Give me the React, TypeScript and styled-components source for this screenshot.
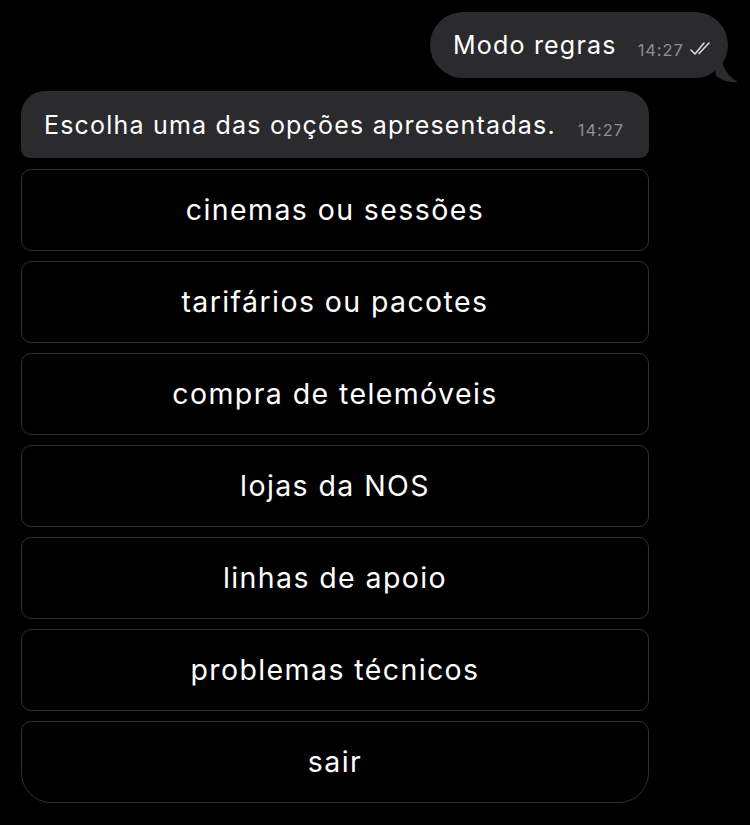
import React from "react";
import styled, { createGlobalStyle } from "styled-components";

const Global = createGlobalStyle`
  html, body { margin: 0; padding: 0; background: #000; }
  body { font-family: Inter, "Liberation Sans", sans-serif; -webkit-font-smoothing: antialiased; }
`;

const Page = styled.div`
  width: 750px;
  height: 825px;
  background: #000;
  display: flex;
  flex-direction: column;
  padding: 12px 22px 0 21px;
  box-sizing: border-box;
`;

const OutRow = styled.div`
  display: flex;
  justify-content: flex-end;
`;

const OutBubble = styled.div`
  position: relative;
  height: 66px;
  width: 298px;
  box-sizing: border-box;
  background: #2b2b2d;
  border-radius: 33px;
  display: flex;
  align-items: center;
  padding: 0 0 0 23px;
`;

const Tail = styled.svg`
  position: absolute;
  right: -12px;
  bottom: -5px;
`;

const MsgText = styled.span`
  color: #fff;
  font-size: 25px;
  letter-spacing: 1.2px;
`;

const Time = styled.span<{ $ml: number }>`
  color: #8d8d92;
  font-size: 16.5px;
  letter-spacing: 0.9px;
  margin-left: ${(p) => p.$ml}px;
  margin-top: 10px;
`;

const Checks = styled.svg`
  margin-left: 6px;
  margin-top: 8px;
`;

const InBubble = styled.div`
  margin-top: 13px;
  height: 67px;
  width: 628px;
  box-sizing: border-box;
  background: #2b2b2d;
  border-radius: 24px 24px 9px 9px;
  display: flex;
  align-items: center;
  padding: 0 0 0 23px;
`;

const Keyboard = styled.div`
  margin-top: 11px;
  width: 628px;
  display: flex;
  flex-direction: column;
  gap: 10px;
`;

const KeyButton = styled.div<{ $last?: boolean }>`
  height: 82px;
  box-sizing: border-box;
  border: 1.5px solid #303032;
  border-radius: ${(p) => (p.$last ? "10px 10px 30px 30px" : "10px")};
  display: flex;
  align-items: center;
  justify-content: center;
  color: #fff;
  font-size: 28.5px;
  letter-spacing: 1.4px;
  padding-bottom: 2px;
`;

const options = [
  "cinemas ou sessões",
  "tarifários ou pacotes",
  "compra de telemóveis",
  "lojas da NOS",
  "linhas de apoio",
  "problemas técnicos",
  "sair",
];

export default function App() {
  return (
    <>
      <Global />
      <Page>
        <OutRow>
          <OutBubble>
            <MsgText>Modo regras</MsgText>
            <Time $ml={21}>14:27</Time>
            <Checks width="22" height="16" viewBox="0 0 22 16">
              <path d="M1 9 L5 13 L14 2" fill="none" stroke="#d8d8dc" strokeWidth="1.6" strokeLinecap="round" strokeLinejoin="round" />
              <path d="M9 12.5 L19 2" fill="none" stroke="#d8d8dc" strokeWidth="1.6" strokeLinecap="round" />
            </Checks>
            <Tail width="26" height="24" viewBox="0 0 26 24">
              <path d="M0 0 L8 0 C9 10 14 17 24 23 C16 24 9 22 2 17 Z" fill="#2b2b2d" />
            </Tail>
          </OutBubble>
        </OutRow>
        <InBubble>
          <MsgText>Escolha uma das opções apresentadas.</MsgText>
          <Time $ml={22}>14:27</Time>
        </InBubble>
        <Keyboard>
          {options.map((o, i) => (
            <KeyButton key={o} $last={i === options.length - 1}>
              {o}
            </KeyButton>
          ))}
        </Keyboard>
      </Page>
    </>
  );
}
